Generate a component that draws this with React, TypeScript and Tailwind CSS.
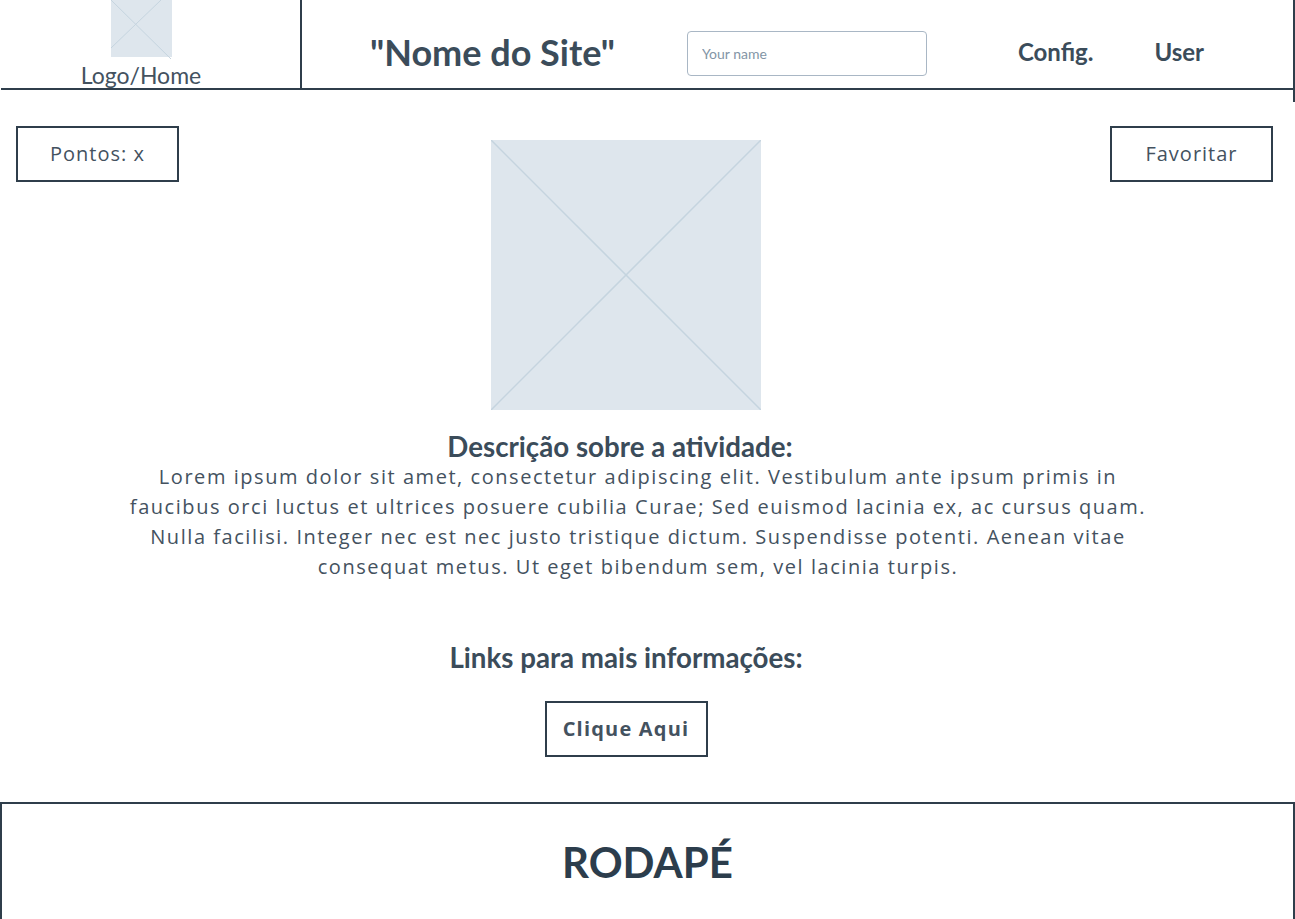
import React from 'react';

const lato = "[font-family:Lato,'Liberation_Sans',sans-serif]";
const body = "[font-family:'Open_Sans','Noto_Sans',sans-serif]";

function Placeholder({ className }: { className: string }) {
  return (
    <div className={`relative bg-[#dee6ed] ${className}`}>
      <svg className="absolute inset-0 h-full w-full" viewBox="0 0 100 100" preserveAspectRatio="none">
        <line x1="0" y1="0" x2="100" y2="100" stroke="#c5d4df" strokeWidth="1.5" vectorEffect="non-scaling-stroke" />
        <line x1="100" y1="0" x2="0" y2="100" stroke="#c5d4df" strokeWidth="1.5" vectorEffect="non-scaling-stroke" />
      </svg>
    </div>
  );
}

function LogoMark() {
  return (
    <div className="relative h-[59px] w-[61px] bg-[#dee6ed]">
      <svg className="absolute inset-0" width="61" height="59" viewBox="0 0 61 59">
        <line x1="0" y1="0" x2="61" y2="60" stroke="#c5d4df" strokeWidth="1" />
        <line x1="50" y1="0" x2="0" y2="48" stroke="#c5d4df" strokeWidth="1" />
      </svg>
    </div>
  );
}

function OutlineButton({ children, bold }: { children: React.ReactNode; bold?: boolean }) {
  return (
    <button
      type="button"
      className={`flex h-[56px] w-[163px] items-center justify-center border-2 border-[#2f3e4b] bg-white text-[20px] text-[#44525f] ${body} ${bold ? 'font-bold tracking-[1.2px]' : 'tracking-[1px]'}`}
    >
      {children}
    </button>
  );
}

export default function App() {
  return (
    <div className="min-h-[919px] w-[1295px] overflow-hidden bg-white text-[#3d4e5c]">
      <div className="h-[102px] border-r-2 border-[#2f3e4b]">
        <header className="ml-px flex h-[90px] border-b-2 border-[#2f3e4b]">
          <div className="flex w-[301px] flex-col items-center border-r-2 border-[#2f3e4b] pr-[19px]">
            <LogoMark />
            <span className={`mt-[5px] text-[23px] leading-[26px] text-[#44525f] ${lato}`}>Logo/Home</span>
          </div>
          <nav className={`flex flex-1 items-center pt-[16px] ${lato}`}>
            <h1 className="ml-[68px] text-[36px] font-bold leading-none text-[#3b4c5a]">"Nome do Site"</h1>
            <input
              placeholder="Your name"
              className={`ml-[72px] mt-[2px] h-[45px] w-[240px] rounded-[4px] border border-[#a9b7c5] px-[14px] text-[14px] text-[#44525f] outline-none placeholder:text-[#8395a6] ${lato}`}
            />
            <a className="ml-[91px] text-[24px] font-bold text-[#3b4c5a]">Config.</a>
            <a className="ml-[61px] text-[24px] font-bold text-[#3b4c5a]">User</a>
          </nav>
        </header>
      </div>

      <main className="flex flex-col">
        <div className="mt-[24px] flex items-start">
          <div className="ml-[16px]">
            <OutlineButton>Pontos: x</OutlineButton>
          </div>
          <Placeholder className="ml-[312px] mt-[14px] h-[270px] w-[270px]" />
          <div className="flex-1" />
          <div className="mr-[22px]">
            <OutlineButton>Favoritar</OutlineButton>
          </div>
        </div>

        <h2 className={`mt-[22px] pr-[55px] text-center text-[27.7px] font-bold leading-[30px] text-[#3b4c5a] ${lato}`}>
          Descrição sobre a atividade:
        </h2>
        <p className={`pr-[19px] text-center text-[20px] leading-[30px] tracking-[1.55px] text-[#44525f] ${body}`}>
          Lorem ipsum dolor sit amet, consectetur adipiscing elit. Vestibulum ante ipsum primis in
          <br />
          faucibus orci luctus et ultrices posuere cubilia Curae; Sed euismod lacinia ex, ac cursus quam.
          <br />
          Nulla facilisi. Integer nec est nec justo tristique dictum. Suspendisse potenti. Aenean vitae
          <br />
          consequat metus. Ut eget bibendum sem, vel lacinia turpis.
        </p>

        <h2 className={`mt-[61px] pr-[43px] text-center text-[27.7px] font-bold leading-[30px] text-[#3b4c5a] ${lato}`}>
          Links para mais informações:
        </h2>
        <div className="mt-[28px] flex justify-center pr-[43px]">
          <OutlineButton bold>Clique Aqui</OutlineButton>
        </div>
      </main>

      <footer className="mt-[45px] flex h-[130px] items-start justify-center border-x-2 border-t-2 border-[#2f3e4b] pt-[32px]">
        <span className={`text-[42px] font-bold leading-[52px] text-[#2c3d4c] ${lato}`}>RODAPÉ</span>
      </footer>
    </div>
  );
}
